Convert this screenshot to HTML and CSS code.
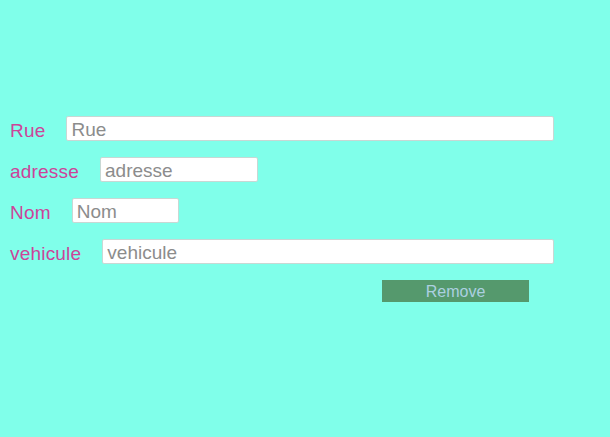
FILE: index.html
```html
<!DOCTYPE html>
<html>
<head>
<meta charset="utf-8">
<link rel="stylesheet" href="styles.css">
</head>
<body>
<form class="form">
  <div class="row"><label class="lbl">Rue</label><input class="field field-rue" placeholder="Rue"></div>
  <div class="row"><label class="lbl">adresse</label><input class="field field-adresse" placeholder="adresse"></div>
  <div class="row"><label class="lbl">Nom</label><input class="field field-nom" placeholder="Nom"></div>
  <div class="row"><label class="lbl">vehicule</label><input class="field field-vehicule" placeholder="vehicule"></div>
  <div class="actions"><button type="button" class="remove">Remove</button></div>
</form>
</body>
</html>
```
FILE: styles.css
```css
html, body {
  margin: 0;
  padding: 0;
  background: #80ffea;
  height: 100%;
}
body {
  font-family: "Liberation Sans", Arial, sans-serif;
}
.form {
  padding: 116px 0 0 10px;
  display: flex;
  flex-direction: column;
  gap: 16px;
}
.row {
  display: flex;
  align-items: center;
  height: 25px;
}
.lbl {
  color: #cc4499;
  font-size: 19px;
  letter-spacing: 0.2px;
  margin-right: 21px;
  position: relative;
  top: 2px;
}
.field {
  box-sizing: border-box;
  height: 25px;
  border: 1px solid #c8d8d4;
  border-radius: 2px;
  background: #fff;
  font-family: "Liberation Sans", Arial, sans-serif;
  font-size: 19px;
  padding: 2px 4px 0;
  color: #333;
  outline: none;
}
.field::placeholder { color: #8c8c8c; }
.field-rue { width: 488px; }
.field-adresse { width: 158px; }
.field-nom { width: 107px; }
.field-vehicule { width: 452px; }
.actions {
  display: flex;
  padding-left: 372px;
}
.remove {
  width: 147px;
  height: 22px;
  border: none;
  background: #55996d;
  color: #acd0e0;
  font-family: "Liberation Sans", Arial, sans-serif;
  font-size: 16px;
  padding: 1px 0 0;
}
```
